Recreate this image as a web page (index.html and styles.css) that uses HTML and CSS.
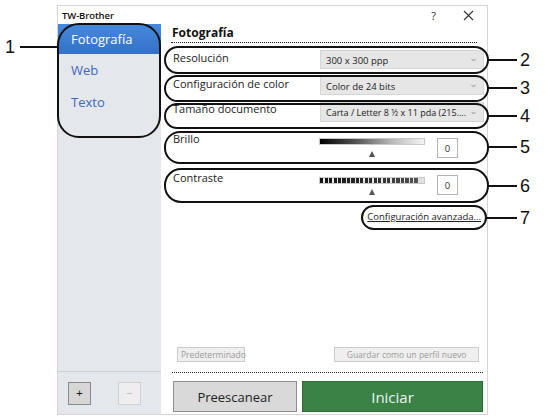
FILE: index.html
```html
<!DOCTYPE html>
<html lang="es">
<head>
<meta charset="utf-8">
<title>TW-Brother</title>
<link rel="stylesheet" href="styles.css">
</head>
<body>
<div class="page">
  <div class="window">
    <div class="titlebar">
      <span class="title">TW-Brother</span>
      <span class="tb-btns">
        <span class="help">?</span>
        <svg class="close" width="11" height="11" viewBox="0 0 11 11"><path d="M1 1L10 10M10 1L1 10" stroke="#333" stroke-width="1.1" fill="none"/></svg>
      </span>
    </div>
    <div class="content">
      <aside class="sidebar">
        <nav class="nav">
          <div class="nav-item active">Fotografía</div>
          <div class="nav-item">Web</div>
          <div class="nav-item">Texto</div>
        </nav>
        <div class="side-foot">
          <button class="sq add">+</button>
          <button class="sq remove">−</button>
        </div>
      </aside>
      <main class="main">
        <h1 class="heading">Fotografía</h1>
        <div class="field f1">
          <span class="label">Resolución</span>
          <div class="select"><span class="val">300 x 300 ppp</span><svg class="chev" width="5" height="4" viewBox="0 0 5 4"><path d="M0.5 0.8L2.5 3L4.5 0.8" stroke="#888" stroke-width="0.9" fill="none"/></svg></div>
        </div>
        <div class="field f2">
          <span class="label">Configuración de color</span>
          <div class="select"><span class="val">Color de 24 bits</span><svg class="chev" width="5" height="4" viewBox="0 0 5 4"><path d="M0.5 0.8L2.5 3L4.5 0.8" stroke="#888" stroke-width="0.9" fill="none"/></svg></div>
        </div>
        <div class="field f3">
          <span class="label">Tamaño documento</span>
          <div class="select tall"><span class="val">Carta / Letter 8 ½ x 11 pda (215....</span><svg class="chev" width="5" height="4" viewBox="0 0 5 4"><path d="M0.5 0.8L2.5 3L4.5 0.8" stroke="#888" stroke-width="0.9" fill="none"/></svg></div>
        </div>
        <div class="slider-row brillo">
          <span class="label">Brillo</span>
          <div class="slider">
            <div class="bar grad"></div>
            <div class="thumb"></div>
          </div>
          <div class="numbox">0</div>
        </div>
        <div class="slider-row contraste">
          <span class="label">Contraste</span>
          <div class="slider">
            <div class="bar stripes"></div>
            <div class="thumb"></div>
          </div>
          <div class="numbox">0</div>
        </div>
        <div class="link-row"><a class="adv">Configuración avanzada...</a></div>
        <div class="spacer"></div>
        <div class="profile-row">
          <button class="flat">Predeterminado</button>
          <button class="flat wide">Guardar como un perfil nuevo</button>
        </div>
        <div class="sep"></div>
        <div class="action-row">
          <button class="btn-pre">Preescanear</button>
          <button class="btn-go">Iniciar</button>
        </div>
      </main>
    </div>
  </div>

  <div class="callout oval o1"></div>
  <div class="callout lead l1"></div>
  <span class="callout num n1">1</span>

  <div class="callout oval o2"></div>
  <div class="callout lead lr l2"></div>
  <span class="callout num nr n2">2</span>

  <div class="callout oval o3"></div>
  <div class="callout lead lr l3"></div>
  <span class="callout num nr n3">3</span>

  <div class="callout oval o4"></div>
  <div class="callout lead lr l4"></div>
  <span class="callout num nr n4">4</span>

  <div class="callout oval o5"></div>
  <div class="callout lead lr l5"></div>
  <span class="callout num nr n5">5</span>

  <div class="callout oval o6"></div>
  <div class="callout lead lr l6"></div>
  <span class="callout num nr n6">6</span>

  <div class="callout oval o7"></div>
  <div class="callout lead l7"></div>
  <span class="callout num nr n7">7</span>
</div>
</body>
</html>
```

FILE: styles.css
```css
* { box-sizing: border-box; }
html, body { margin: 0; padding: 0; background: #fff; }
body { font-family: "Open Sans", "Noto Sans", sans-serif; color: #222; }

.page {
  position: relative;
  width: 545px;
  height: 418px;
  overflow: hidden;
  padding: 5px 0 0 57px;
}

.window {
  width: 431px;
  height: 410px;
  border: 1px solid #d4d4d4;
  display: flex;
  flex-direction: column;
  background: #fff;
}

.titlebar {
  height: 18px;
  display: flex;
  align-items: center;
  justify-content: space-between;
  padding: 0 13px 0 4px;
  font-size: 9.5px;
  color: #111;
}
.title { font-weight: 600; letter-spacing: -0.1px; }
.tb-btns { display: flex; align-items: center; gap: 27px; }
.help { font-size: 11px; color: #333; }
.close { display: block; }

.content { flex: 1; display: flex; min-height: 0; }

.sidebar {
  width: 103px;
  background: #e4e7ec;
  display: flex;
  flex-direction: column;
}
.nav { flex: 1; }
.nav-item {
  height: 32px;
  padding-left: 13px;
  display: flex;
  align-items: center;
  font-size: 13px;
  color: #3b68c0;
}
.nav-item.active {
  height: 30px;
  background: linear-gradient(#4689dc, #3272c8);
  color: #fff;
}
.side-foot {
  height: 43px;
  border-top: 1px solid #cdd1d8;
  display: flex;
  align-items: flex-start;
  padding: 10px 0 0 10px;
  gap: 27px;
}
.sq {
  width: 23px;
  height: 23px;
  padding: 0;
  font-family: "Liberation Sans", sans-serif;
  font-size: 11px;
  line-height: 21px;
}
.sq.add { background: #d6d6d6; border: 1px solid #8a8a8a; color: #111; }
.sq.remove { background: #eeeeee; border: 1px solid #d0d0d0; color: #bbb; }

.main {
  flex: 1;
  display: flex;
  flex-direction: column;
  padding: 0 3px 2px 11px;
}

.heading {
  margin: 0 7px 0 -1px;
  height: 19px;
  border-bottom: 1px dotted #222;
  font-size: 12px;
  font-weight: 700;
  line-height: 18px;
  padding-left: 1px;
  color: #111;
}

.label { font-size: 11px; color: #222; line-height: 14px; padding-left: 1px; }

.field {
  display: flex;
  justify-content: space-between;
  align-items: flex-start;
  margin-top: 7px;
}
.field .label { padding-top: 1px; }
.f3 .label { padding-top: 0; }

.select {
  width: 164px;
  height: 19px;
  background: #e6e6e6;
  border: 1px solid #d6d6d6;
  font-size: 9.5px;
  color: #222;
  display: flex;
  align-items: center;
  justify-content: space-between;
  gap: 4px;
  padding: 1px 7px 0 5px;
}
.val { white-space: nowrap; overflow: hidden; }
.select.tall { height: 20px; font-size: 9px; }
.chev { display: block; flex: none; }

.slider-row {
  display: flex;
  align-items: flex-start;
  margin-right: 26px;
}
.brillo { margin-top: 10px; height: 27px; }
.contraste { margin-top: 12px; height: 24px; }
.slider-row .label { flex: 1; }
.slider {
  width: 106px;
  display: flex;
  flex-direction: column;
  align-items: center;
  margin-right: 12px;
}
.brillo .slider { padding-top: 6px; }
.contraste .slider { padding-top: 6px; }
.bar { width: 106px; height: 7px; border: 1px solid #c8c8c8; }
.bar.grad { background: linear-gradient(90deg, #000 0%, #555 35%, #bbb 70%, #f4f4f4 100%); }
.bar.stripes {
  background:
    repeating-linear-gradient(90deg, transparent 0 3px, #e8e8e8 3px 4.5px),
    linear-gradient(90deg, #111, #333 60%, #555 95%, #ddd 95%);
}
.thumb {
  width: 0;
  height: 0;
  border-left: 3px solid transparent;
  border-right: 3px solid transparent;
  border-bottom: 6px solid #555;
  margin-top: 6px;
}
.contraste .thumb { margin-top: 5px; }
.numbox {
  width: 21px;
  height: 20px;
  border: 1px solid #b4b4b4;
  background: #fff;
  font-size: 9.5px;
  color: #333;
  display: flex;
  align-items: center;
  justify-content: center;
}
.brillo .numbox { margin-top: 6px; }
.contraste .numbox { margin-top: 4px; }

.link-row {
  margin-top: 15px;
  display: flex;
  justify-content: flex-end;
  padding-right: 3px;
}
.adv {
  font-size: 9.5px;
  color: #222;
  text-decoration: underline;
  line-height: 13px;
}

.spacer { flex: 1; }

.profile-row {
  display: flex;
  justify-content: space-between;
  padding: 0 5px 0 5px;
}
.flat {
  height: 15px;
  padding: 0 3px;
  background: #efefef;
  border: 1px solid #cccccc;
  color: #9a9a9a;
  font-family: "Open Sans", "Noto Sans", sans-serif;
  font-size: 8.5px;
  line-height: 12px;
  width: 68px;
}
.flat.wide { width: 145px; }

.sep {
  margin: 10px 1px 0 0;
  border-top: 1px dotted #222;
}

.action-row {
  display: flex;
  gap: 5px;
  margin-top: 8px;
  padding: 0 1px;
}
.btn-pre {
  width: 124px;
  height: 31px;
  background: #d9d9d9;
  border: 1px solid #8e8e8e;
  color: #222;
  font-family: "Open Sans", "Noto Sans", sans-serif;
  font-size: 13px;
}
.btn-go {
  flex: 1;
  height: 31px;
  background: #3a8246;
  border: 1px solid #2c6a37;
  color: #eef4ee;
  font-family: "Open Sans", "Noto Sans", sans-serif;
  font-size: 15px;
}

/* annotation callouts (overlay) */
.callout { position: absolute; }
.oval { border: 2px solid #111; border-radius: 14px; }
.o1 { left: 57px; top: 23px; width: 104px; height: 115px; border-radius: 22px; }
.o2 { left: 164px; top: 46px; width: 325px; height: 28px; }
.o3 { left: 164px; top: 75px; width: 325px; height: 27px; }
.o4 { left: 164px; top: 103px; width: 325px; height: 26px; }
.o5 { left: 164px; top: 131px; width: 325px; height: 33px; border-radius: 16px; }
.o6 { left: 164px; top: 168px; width: 325px; height: 35px; border-radius: 17px; }
.o7 { left: 361px; top: 205px; width: 126px; height: 25px; border-radius: 13px; }

.lead { height: 2px; background: #111; }
.l1 { left: 20px; top: 46px; width: 38px; }
.lr { left: 488px; width: 29px; }
.l2 { top: 59px; }
.l3 { top: 87px; }
.l4 { top: 115px; }
.l5 { top: 146px; }
.l6 { top: 185px; }
.l7 { left: 486px; width: 31px; top: 217px; }

.num {
  font-family: "Liberation Sans", Arial, sans-serif;
  font-size: 18px;
  line-height: 18px;
  color: #111;
}
.n1 { left: 5px; top: 38px; }
.nr { left: 520px; }
.n2 { top: 51px; }
.n3 { top: 79px; }
.n4 { top: 107px; }
.n5 { top: 138px; }
.n6 { top: 177px; }
.n7 { top: 209px; }
```
